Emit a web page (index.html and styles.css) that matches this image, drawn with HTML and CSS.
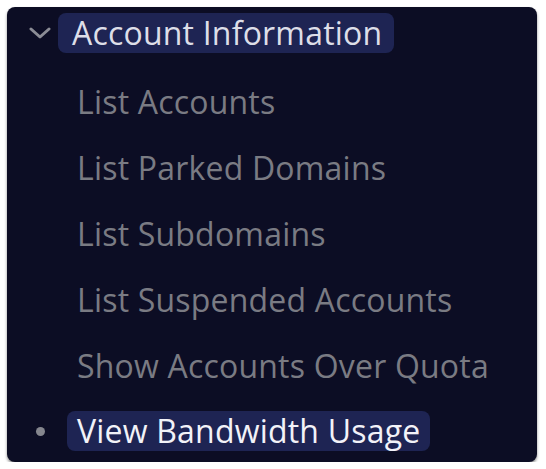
FILE: index.html
```html
<!DOCTYPE html>
<html>
<head>
<meta charset="utf-8">
<link rel="stylesheet" href="styles.css">
</head>
<body>
<div class="panel">
  <div class="group-head">
    <span class="icon-col">
      <svg width="22" height="14" viewBox="0 0 22 14"><path d="M2 3 L11 11 L20 3" fill="none" stroke="#8b8c95" stroke-width="3" stroke-linecap="round" stroke-linejoin="round"/></svg>
    </span>
    <span class="pill pill-head">Account Information</span>
  </div>
  <ul class="items">
    <li class="item">List Accounts</li>
    <li class="item">List Parked Domains</li>
    <li class="item">List Subdomains</li>
    <li class="item">List Suspended Accounts</li>
    <li class="item">Show Accounts Over Quota</li>
    <li class="item item-active"><span class="icon-col"><span class="dot"></span></span><span class="pill pill-active">View Bandwidth Usage</span></li>
  </ul>
</div>
</body>
</html>
```
FILE: styles.css
```css
html, body {
  margin: 0;
  padding: 0;
  background: #ffffff;
}
body {
  font-family: "Open Sans", "Noto Sans", sans-serif;
  letter-spacing: 0.2px;
}
.panel {
  margin: 7px 0 0 7px;
  width: 530px;
  height: 455px;
  box-sizing: border-box;
  background: #0c0d24;
  border-radius: 8px;
  box-shadow: 0 2px 3px rgba(0,0,0,0.45);
  overflow: hidden;
}
.group-head {
  height: 52px;
  display: flex;
  align-items: center;
  padding-left: 21px;
}
.icon-col {
  width: 24px;
  display: flex;
  align-items: center;
  justify-content: center;
}
.pill {
  display: inline-flex;
  align-items: center;
  height: 40px;
  border-radius: 8px;
  background: #1e2453;
  font-size: 32px;
  line-height: 40px;
  white-space: nowrap;
}
.pill-head {
  margin-left: 6px;
  padding: 0 12px 0 14px;
  color: #dddee8;
}
.items {
  list-style: none;
  margin: 0;
  padding: 9px 0 0 0;
}
.item {
  height: 66px;
  display: flex;
  align-items: center;
  padding-left: 70px;
  font-size: 32px;
  color: #7a7b83;
  white-space: nowrap;
}
.item-active {
  padding-left: 21px;
}
.dot {
  width: 9px;
  height: 9px;
  border-radius: 50%;
  background: #85868e;
}
.pill-active {
  margin-left: 15px;
  padding: 0 10px;
  color: #f2f2f8;
}
```
